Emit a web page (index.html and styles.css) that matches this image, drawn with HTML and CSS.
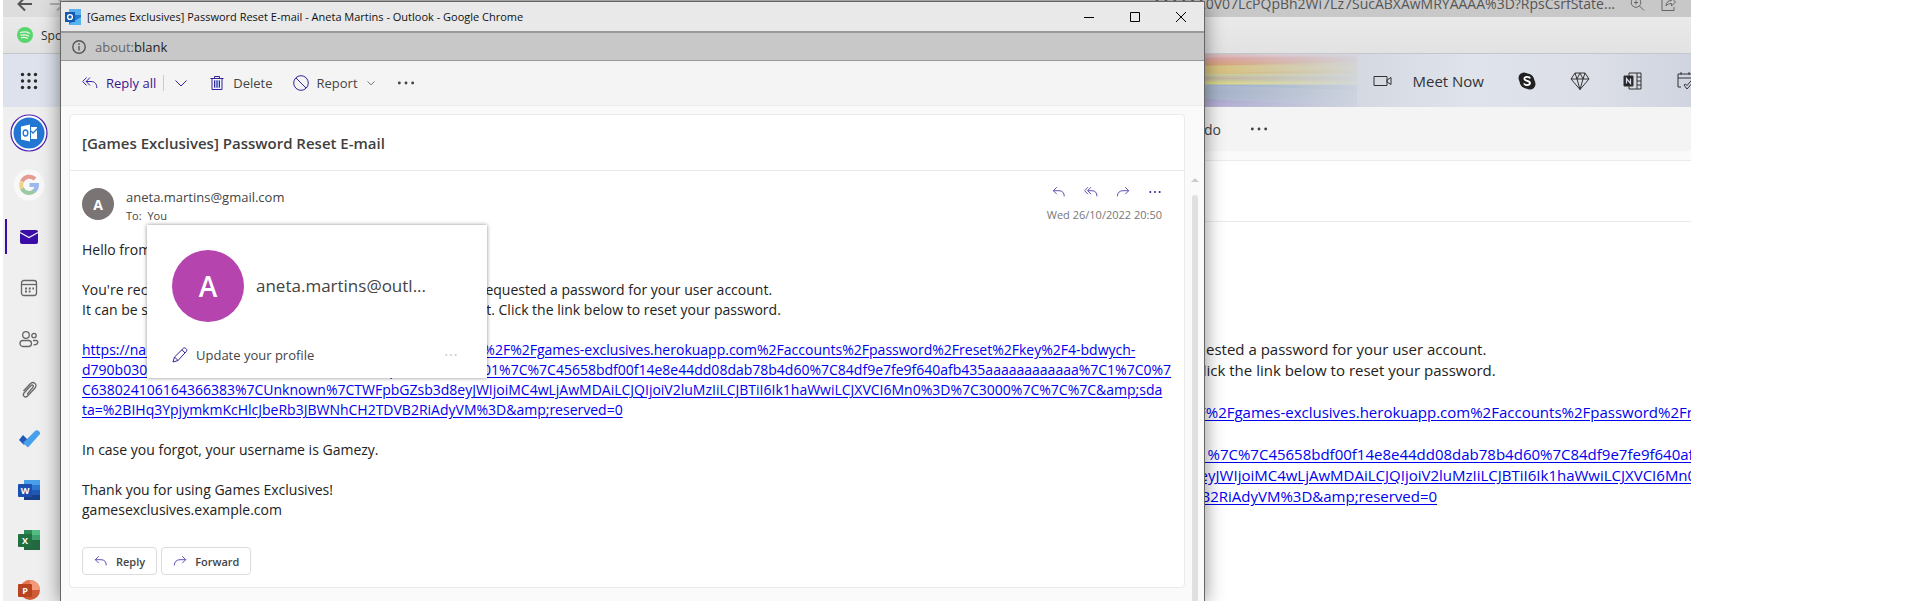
FILE: index.html
```html
<!DOCTYPE html>
<html lang="en">
<head>
<meta charset="utf-8">
<title>[Games Exclusives] Password Reset E-mail - Aneta Martins - Outlook</title>
<link rel="stylesheet" href="styles.css">
</head>
<body>
<svg class="defs" aria-hidden="true">
  <symbol id="reply" viewBox="0 0 16 16"><path d="M5.5 2.5 1.500 6.500l4 4M1.500 6.500H8c4 0 6 2.500 6 6.500"/></symbol>
  <symbol id="reply-all" viewBox="0 0 16 16"><path d="M4.500 2.500.700 6.500l3.800 4M8 2.500 4.200 6.500l3.800 4M4.200 6.500H9c4 0 5.800 2.500 5.800 6.500"/></symbol>
  <symbol id="forward" viewBox="0 0 16 16"><path d="m10.500 2.500 4 4-4 4M14.500 6.500H8c-4 0-6.500 2.500-6.500 6.500"/></symbol>
  <symbol id="chevron" viewBox="0 0 16 16"><path d="m2.500 5.500 5.500 5.500 5.500-5.500"/></symbol>
  <symbol id="dots" viewBox="0 0 18 4"><g fill="currentColor" stroke="none"><circle cx="3" cy="2" r="1.300"/><circle cx="9" cy="2" r="1.300"/><circle cx="15" cy="2" r="1.300"/></g></symbol>
</svg>

<div class="desktop">
  <div class="browser">
    <div class="address-row">
      <svg class="icon back" viewBox="0 0 16 16"><path d="M15 8H2M8 1.500 1.500 8 8 14.500"/></svg>
      <svg class="icon ahead" viewBox="0 0 16 16"><path d="M1 8h13M8 1.500 14.500 8 8 14.500"/></svg>
      <div class="address">AAAAAA0V07LcPQpBh2Wi7Lz7SucABXAwMRYAAAA%3D?RpsCsrfState...</div>
      <svg class="icon muted" viewBox="0 0 16 16"><circle cx="7" cy="6.500" r="4.800"/><path d="m10.500 10 4.500 4.500M7 4.500v4M5 6.500h4" /></svg>
      <svg class="icon muted" viewBox="0 0 16 16"><path d="M5 3H1v11.500h12V11M5 10c0-3.500 2-5.500 5.500-5.500V2l4 4-4 4V7.500C8 7.500 6.500 8 5 10z"/></svg>
    </div>
    <div class="bookmarks">
      <svg class="spotify" viewBox="0 0 16 16"><circle cx="8" cy="8" r="8" fill="#58d66d"/><path d="M3.500 5.500c3-.9 6.500-.6 9 .8M4 8.200c2.600-.7 5.400-.4 7.500.8M4.500 10.700c2-.5 4.300-.3 6 .6" fill="none" stroke="#e8f3e9" stroke-width="1.300" stroke-linecap="round"/></svg>
      <a href="#spotify">Spotify</a>
    </div>
    <div class="suite">
      <svg class="waffle" viewBox="0 0 18 18" fill="#2b2b2b"><circle cx="2.500" cy="2.500" r="1.700"/><circle cx="9" cy="2.500" r="1.700"/><circle cx="15.500" cy="2.500" r="1.700"/><circle cx="2.500" cy="9" r="1.700"/><circle cx="9" cy="9" r="1.700"/><circle cx="15.500" cy="9" r="1.700"/><circle cx="2.500" cy="15.500" r="1.700"/><circle cx="9" cy="15.500" r="1.700"/><circle cx="15.500" cy="15.500" r="1.700"/></svg>
      <svg class="rainbow" viewBox="0 0 203 53" preserveAspectRatio="none">
        <defs>
          <linearGradient id="fade"><stop offset="0" stop-color="#d8dce4" stop-opacity="0"/><stop offset=".35" stop-color="#d8dce4" stop-opacity=".15"/><stop offset=".75" stop-color="#d4d9e2" stop-opacity=".6"/><stop offset="1" stop-color="#d4d9e2" stop-opacity=".88"/></linearGradient>
          <linearGradient id="bands" x1="0" x2="0" y1="0" y2="1"><stop offset="0" stop-color="#dfcad0"/><stop offset=".08" stop-color="#d99a98"/><stop offset=".21" stop-color="#d39b68"/><stop offset=".23" stop-color="#d3bd6c"/><stop offset=".36" stop-color="#cfae60"/><stop offset=".38" stop-color="#c9ca8c"/><stop offset=".46" stop-color="#b9ad95"/><stop offset=".56" stop-color="#dad878"/><stop offset=".59" stop-color="#93a7c6"/><stop offset=".7" stop-color="#8199a9"/><stop offset=".85" stop-color="#93a5bc"/><stop offset=".88" stop-color="#a6a2cc"/><stop offset="1" stop-color="#b0acd0"/></linearGradient>
        </defs>
        <rect width="203" height="53" fill="url(#bands)"/>
        <path d="M50 4Q110 -2 203 0H50z" fill="#d7b3b4"/>
        <path d="M50 12 203 8v7L50 20z" fill="#d9c27a" opacity=".6"/>
        <path d="M50 31 203 36v17L50 45z" fill="#a9b3cf" opacity=".7"/>
        <rect width="203" height="53" fill="url(#fade)"/>
      </svg>
      <div class="suite-tools">
        <svg class="icon video" viewBox="0 0 20 16"><path d="M1 3.500h13v9H1zM14 7l4-2.500v7L14 9z"/></svg>
        <a class="meet" href="#meet">Meet Now</a>
        <svg class="icon" viewBox="0 0 20 20"><g fill="#222" stroke="none"><circle cx="7" cy="7" r="5.500"/><circle cx="13" cy="13" r="5.500"/><circle cx="10" cy="10" r="7.500"/></g><path stroke="#fff" stroke-width="1.800" d="M13 7.500C12.500 5.500 7.300 5.300 7.300 7.800S13 9.600 13 12.100s-5.500 2.600-6 .3"/></svg>
        <svg class="icon" viewBox="0 0 20 20"><path d="M5 2h10l4 6-9 10.500L1 8zM1 8h18M5 2l2 6 3 10.500L13 8l2-6M7 8l3-6 3 6"/></svg>
        <svg class="icon" viewBox="0 0 20 20"><path d="M6 5V2h12v16H6v-3M14 2v16M14 6h4M14 10h4M14 14h4"/><path fill="#222" d="M1 5h9v10H1z"/><path stroke="#dde" stroke-width="1.300" d="M3.500 12.500v-5l4 5v-5"/></svg>
        <svg class="icon" viewBox="0 0 20 20"><path d="M5 16H2V3h14v6M2 7h14M5 1v3M13 1v3M8 14l3 4 8-9-2-1.500-6 7L9.500 13z"/></svg>
      </div>
    </div>
    <div class="workspace">
      <nav class="rail" aria-label="Apps">
        <div class="rail-group accounts">
          <a href="#outlook"><svg width="38" height="38" viewBox="0 0 38 38"><circle cx="19" cy="19" r="18" fill="#fff" stroke="#4b20b0" stroke-width="1.200"/><circle cx="19" cy="19" r="15.500" fill="#2377d3"/><path fill="#fff" d="m11 12.500 9-2v17l-9-2zM21 13h6v12h-6z"/><ellipse cx="15.500" cy="19" rx="2.300" ry="3" fill="none" stroke="#2377d3" stroke-width="1.400"/><path d="m21 17 2 2 5-5" fill="none" stroke="#2377d3" stroke-width="1.300"/></svg></a>
          <a href="#google"><svg width="32" height="32" viewBox="0 0 32 32"><circle cx="16" cy="16" r="15.500" fill="#f8f8f8"/><g fill="none" stroke-width="4"><path stroke="#e69a92" d="M9 12.500a8 8 0 0 1 13-2.500"/><path stroke="#efd58c" d="M9 19.500a8 8 0 0 1 0-7"/><path stroke="#9bc9a3" d="M21.500 21.800A8 8 0 0 1 9 19.500"/><path stroke="#9bb9ec" d="M16.500 16H24a8 8 0 0 1-2.800 6"/></g></svg></a>
        </div>
        <div class="rail-group modules">
          <a class="active" href="#mail"><svg width="20" height="20" viewBox="0 0 20 20"><rect x="1" y="3" width="18" height="14" rx="2" fill="#3a0ca8"/><path d="m1 5.500 9 5 9-5" fill="none" stroke="#efefef" stroke-width="1.400"/></svg></a>
          <a href="#calendar"><svg class="icon line" viewBox="0 0 20 20"><rect x="2.500" y="2.500" width="15" height="15" rx="2.500"/><path d="M2.500 6.500h15"/><path stroke-dasharray="2 1.700" stroke-width="2" d="M6 10.500h9M6 13.500h5.500"/></svg></a>
          <a href="#people"><svg class="icon line" viewBox="0 0 20 20"><circle cx="7" cy="6" r="3.300"/><circle cx="15" cy="6.500" r="2.200"/><rect x="1" y="11.500" width="11.500" height="6" rx="3"/><path d="M14 11.500h3c3 0 2.500 4.500-2.500 4.300"/></svg></a>
          <a href="#files"><svg class="icon line" viewBox="0 0 20 20"><path d="m4.500 11 6.500-7c3.500-3.500 8 .5 5 4l-7.500 8c-2.500 2.500-5.500-.500-3.500-3l7-7.500c1.300-1.300 3.200.3 2 1.700L8 14.300"/></svg></a>
        </div>
        <div class="rail-group apps">
          <a href="#todo"><svg width="24" height="20" viewBox="0 0 24 20"><path fill="#2358b8" d="m5 5 5 5-4 5-5-5z"/><path fill="#46a0ea" d="m5 13 12-12c2-2 6 1 5 3L10 17.500z"/></svg></a>
          <a href="#word"><svg width="22" height="22" viewBox="0 0 22 22"><path fill="#4aa0e8" d="M6 1h16v5H6z"/><path fill="#2f78d2" d="M6 6h16v5H6z"/><path fill="#2058b5" d="M6 11h16v5H6z"/><path fill="#173f8c" d="M6 16h16v5H6z"/><rect y="5" width="14" height="13" rx="1" fill="#1d4fae"/><text x="7" y="15">W</text></svg></a>
          <a href="#excel"><svg width="22" height="22" viewBox="0 0 22 22"><path fill="#2e8b57" d="M6 1h8v10H6z"/><path fill="#52bd82" d="M14 1h8v5h-8z"/><path fill="#3ea06b" d="M14 6h8v5h-8z"/><path fill="#23683f" d="M6 11h16v10H6z"/><rect y="5" width="14" height="13" rx="1" fill="#226f40"/><text x="7" y="15">X</text></svg></a>
          <a href="#powerpoint"><svg width="22" height="22" viewBox="0 0 22 22"><circle cx="12" cy="11" r="10" fill="#ce5b35"/><path fill="#f49a78" d="M12 1a10 10 0 0 1 10 10H12z"/><path fill="#e5764f" d="M12 1v10H2A10 10 0 0 1 12 1z"/><rect y="5" width="14" height="13" rx="1" fill="#b8431f"/><text x="7" y="15">P</text></svg></a>
        </div>
      </nav>
      <main class="reader">
        <div class="reader-bar"><span>Undo</span><svg class="dots large"><use href="#dots"/></svg></div>
        <div class="reader-subject"></div>
        <div class="reader-body">
          <p>You're receiving this email because you or someone else has requested a password for your user account.<br>It can be safely ignored if you did not request a password reset. Click the link below to reset your password.</p>
          <p><a href="#reset">https://nam1.safelinks.protection.outlook.com/?url=https%3A%2F%2Fgames-exclusives.herokuapp.com%2Faccounts%2Fpassword%2Freset<br>%2Fkey%2F4-bdwych-<br>d790b0306a4d5ce17fd2f4bb8e1c9a207f%2F&amp;amp;data=05%7C01%7C%7C45658bdf00f14e8e44dd08dab78b4d60%7C84df9e7fe9f640afb435aaaaaaaaaaaa<br>%7C0%7638024106164366383%7CUnknown%7CTWFpbGZsb3d8eyJWIjoiMC4wLjAwMDAiLCJQIjoiV2luMzIiLCJBTiI6Ik1haWwiLCJXVCI6Mn0%3D<br>C%7C&amp;amp;sdata=%2BIHq3YpjymkmKcHlcJbeRb3JBWNhCH2TDVB2RiAdyVM%3D&amp;amp;reserved=0</a></p>
        </div>
      </main>
    </div>
  </div>

  <section class="window">
    <header class="titlebar">
      <svg class="app-icon" viewBox="0 0 16 16"><path fill="#5bb0ee" d="M4 0h12v8H4z"/><path fill="#1f78cc" d="M4 6h12v10H4z"/><path fill="#53b4f0" d="m4 15 12-7v8H4z"/><rect y="3" width="10" height="10" fill="#1259b0"/><circle cx="5" cy="8" r="2.400" fill="none" stroke="#fff" stroke-width="1.400"/></svg>
      <h1>[Games Exclusives] Password Reset E-mail - Aneta Martins - Outlook - Google Chrome</h1>
      <button aria-label="Minimize"><svg viewBox="0 0 10 10"><path d="M0 5.500h10"/></svg></button>
      <button aria-label="Maximize"><svg viewBox="0 0 10 10"><path d="M.500.500h9v9h-9z"/></svg></button>
      <button aria-label="Close"><svg viewBox="0 0 10 10"><path d="m0 0 10 10M10 0 0 10"/></svg></button>
    </header>
    <div class="location">
      <svg class="info" viewBox="0 0 14 14"><circle cx="7" cy="7" r="6.200"/><path d="M7 6v4.500M7 3.300v1.600"/></svg>
      <span>about:<b>blank</b></span>
    </div>
    <div class="commands">
      <button class="reply-all"><svg class="icon"><use href="#reply-all"/></svg>Reply all</button>
      <button class="split" aria-label="More reply options"><svg class="icon"><use href="#chevron"/></svg></button>
      <button class="delete"><svg class="icon" viewBox="0 0 16 16"><path fill="#a9c5ee" d="M5.500 5h5v8h-5z" stroke="none"/><path d="M1.500 3.500h13M5.500 3.500v-2h5v2M3 3.500v11h10v-11M5.500 5.500v7M8 5.500v7M10.500 5.500v7"/></svg>Delete</button>
      <button class="report"><svg class="icon" viewBox="0 0 16 16"><circle cx="8" cy="8" r="7.300"/><path d="m3 3 10 10"/></svg>Report<svg class="small-chevron"><use href="#chevron"/></svg></button>
      <button aria-label="More"><svg class="dots large"><use href="#dots"/></svg></button>
    </div>
    <div class="content">
      <article class="mail">
        <h2>[Games Exclusives] Password Reset E-mail</h2>
        <div class="message">
          <div class="sender">
            <span class="avatar">A</span>
            <div class="who"><div class="from">aneta.martins@gmail.com</div><div class="to">To: <span>You</span></div></div>
            <div class="meta">
              <div class="actions">
                <button aria-label="Reply"><svg class="icon"><use href="#reply"/></svg></button>
                <button aria-label="Reply all"><svg class="icon"><use href="#reply-all"/></svg></button>
                <button aria-label="Forward"><svg class="icon"><use href="#forward"/></svg></button>
                <button aria-label="More actions"><svg class="dots"><use href="#dots"/></svg></button>
              </div>
              <time>Wed 26/10/2022 20:50</time>
            </div>
          </div>
          <div class="text">
            <p>Hello from Games Exclusives!</p>
            <p>You're receiving this email because you or someone else has requested a password for your user account.<br>It can be safely ignored if you did not request a password reset. Click the link below to reset your password.</p>
            <p><a href="#reset">https://nam1.safelinks.protection.outlook.com/?url=https%3A%2F%2Fgames-exclusives.herokuapp.com%2Faccounts%2Fpassword%2Freset%2Fkey%2F4-bdwych-<br>d790b0306a4d5ce17fd2f4bb8e1c9a20%2F&amp;amp;data=05%7C01%7C%7C45658bdf00f14e8e44dd08dab78b4d60%7C84df9e7fe9f640afb435aaaaaaaaaaaa%7C1%7C0%7<br>C638024106164366383%7CUnknown%7CTWFpbGZsb3d8eyJWIjoiMC4wLjAwMDAiLCJQIjoiV2luMzIiLCJBTiI6Ik1haWwiLCJXVCI6Mn0%3D%7C3000%7C%7C%7C&amp;amp;sda<br>ta=%2BIHq3YpjymkmKcHlcJbeRb3JBWNhCH2TDVB2RiAdyVM%3D&amp;amp;reserved=0</a></p>
            <p>In case you forgot, your username is Gamezy.</p>
            <p>Thank you for using Games Exclusives!<br>gamesexclusives.example.com</p>
            <aside class="profile">
              <div class="identity"><span class="portrait">A</span><span class="name">aneta.martins@outl...</span></div>
              <div class="profile-actions">
                <button><svg class="icon" viewBox="0 0 16 16"><path d="m1 15 1.500-5L11.500 1.200c1.500-1.200 4.300 1.300 3 3L6 13.500zM10 2.700 13 6M2.500 10 6 13.500"/></svg>Update your profile</button>
                <button class="faint" aria-label="More"><svg class="dots"><use href="#dots"/></svg></button>
              </div>
            </aside>
          </div>
          <div class="responses">
            <button><svg class="icon"><use href="#reply"/></svg>Reply</button>
            <button><svg class="icon"><use href="#forward"/></svg>Forward</button>
          </div>
        </div>
      </article>
      <div class="scrollbar"><i></i><b></b></div>
    </div>
  </section>
</div>
</body>
</html>
```
FILE: styles.css
```css
* { box-sizing: border-box; }
body { margin: 0; background: #fff; color: #444; font-family: "Open Sans", "Noto Sans", sans-serif; font-size: 14px; }
h1, h2, p { margin: 0; font-weight: 400; }
button { display: flex; align-items: center; padding: 0; border: 0; background: none; color: inherit; font: inherit; }
svg { display: block; flex: none; }
.defs { position: absolute; width: 0; height: 0; }
.icon { width: 16px; height: 16px; fill: none; stroke: currentColor; stroke-width: 1; }
.dots { width: 14px; height: 4px; }
.dots.large { width: 20px; height: 6px; }

.desktop { position: relative; height: calc(100vh - 2px); margin: 0 229px 0 3px; overflow: hidden; }
.browser { height: 100%; display: flex; flex-direction: column; }
.address-row { display: flex; align-items: center; height: 17px; padding: 0 14px 10px; background: linear-gradient(90deg, #ddd 0 60px, #c8c8c8 60px); color: #555; }
.address-row .back { stroke-width: 2; }
.address-row .ahead { margin-left: 16px; color: #aaa; stroke-width: 2; }
.address { flex: 1; margin-right: 14px; text-align: right; font-size: 14px; line-height: 20px; }
.muted { color: #666; }
.muted + .muted { margin-left: 16px; }
.bookmarks { display: flex; align-items: center; gap: 8px; height: 37px; padding-left: 14px; border-bottom: 1px solid #c3c7cc; background: linear-gradient(#eaeaea, #e2e2e2); font-size: 12px; }
.bookmarks a { color: #333; text-decoration: none; }
.spotify { width: 16px; height: 16px; }
.suite { display: flex; align-items: center; justify-content: space-between; height: 53px; background: linear-gradient(90deg, #dde2ec 77%, #d4d8e0 80%, #dfe3ec 87%, #dcdfe7 94%, #cfd4e0); }
.waffle { width: 18px; height: 18px; margin-left: 17px; }
.rainbow { width: 203px; height: 53px; margin-left: auto; }
.suite-tools { display: flex; align-items: center; gap: 33px; margin: 0 -5px 0 16px; color: #333; }
.suite-tools .icon { width: 20px; height: 20px; }
.suite-tools .icon.video { margin-right: -14px; }
.meet { color: #333; font-size: 15px; text-decoration: none; }
.workspace { flex: 1; min-height: 0; display: flex; }
.rail { width: 58px; background: #efefef; color: #666; }
.rail-group a { display: flex; align-items: center; height: 50px; padding-left: 15px; }
.rail-group a svg { margin-right: auto; }
.rail .accounts a, .rail .modules a { height: 51px; }
.rail .accounts a { height: 52px; padding-left: 7px; }
.rail .accounts a + a { padding-left: 10px; }
.rail .modules a { padding-left: 12px; border-left: 2px solid transparent; margin-left: 2px; color: inherit; background-clip: padding-box; }
.rail .modules .active { height: 35px; margin-top: 8px; margin-bottom: 8px; border-left-color: #3a0ca8; }
.rail .modules .icon { width: 20px; height: 20px; stroke-width: 1.3px; }
.rail text { fill: #fff; font: 700 9px "Open Sans", sans-serif; text-anchor: middle; }
.reader { flex: 1; min-width: 0; }
.reader-bar { display: flex; align-items: center; justify-content: flex-end; gap: 28px; height: 44px; padding-right: 422px; background: #f4f4f4; font-size: 14px; }
.reader-subject { height: 71px; border-top: 9px solid #fafafa; border-bottom: 1px solid #ebebeb; box-shadow: inset 0 1px #ebebeb; }
.reader-body { display: flex; flex-direction: column; gap: 21px; padding: 117px 0 0 686px; color: #222; font-size: 15px; line-height: 21px; white-space: nowrap; }
a { color: #0000ee; text-underline-offset: 2px; }

.window { position: absolute; inset: 1px 486px 0 57px; display: flex; flex-direction: column; border: 1px solid #666; border-bottom: 0; background: #fafafa; box-shadow: 0 2px 18px rgba(0, 0, 0, .45); }
.titlebar { display: flex; align-items: center; height: 29px; padding-left: 4px; background: #e9e9e9; color: #111; }
.app-icon { width: 16px; height: 16px; }
.titlebar h1 { flex: 1; margin-left: 6px; font-size: 11px; }
.titlebar button { width: 46px; height: 28px; justify-content: center; }
.titlebar button svg { width: 10px; height: 10px; fill: none; stroke: #000; }
.location { display: flex; align-items: center; gap: 9px; height: 30px; padding-left: 11px; border-top: 2px solid #999; border-bottom: 1px solid #999; background: #c8c8c8; color: #666; font-size: 13px; }
.location b { color: #222; font-weight: 400; }
.info { width: 14px; height: 14px; fill: none; stroke: #555; stroke-width: 1.4px; }
.commands { display: flex; align-items: center; height: 45px; padding-left: 21px; border-bottom: 1px solid #ebebeb; background: #f4f4f4; font-size: 13px; }
.commands .icon { color: #33229a; }
.commands button { gap: 8px; }
.commands .reply-all { color: #3a1590; }
.commands .split { margin-left: 7px; padding: 0 20px 0 9px; border-left: 1px solid #ccc; }
.delete { margin-right: 20px; }
.report { margin-right: 20px; }
.small-chevron { width: 10px; height: 10px; fill: none; stroke: #666; stroke-width: 1.5px; }
.content { flex: 1; display: flex; align-items: flex-start; padding: 8px 0 0 8px; }
.mail { flex: 1; min-width: 0; border: 1px solid #ebebeb; border-radius: 4px; background: #fff; }
.mail h2 { height: 56px; padding-left: 12px; border-bottom: 1px solid #ebebeb; color: #3f3f3f; font-size: 15px; line-height: 56px; font-weight: 600; }
.message { padding: 12px 12px 12px; }
.sender { display: flex; align-items: center; height: 42px; gap: 12px; }
.avatar, .portrait { display: grid; place-items: center; width: 32px; height: 32px; border-radius: 50%; background: #7a7574; color: #fff; font-weight: 700; }
.who { flex: 1; padding-top: 4px; }
.from { font-size: 13px; line-height: 20px; }
.to { font-size: 11px; line-height: 18px; }
.to span { margin-left: 3px; }
.meta { padding-right: 10px; }
.actions { display: flex; justify-content: flex-end; gap: 18px; align-items: center; height: 18px; color: #33229a; }
.meta time { display: block; padding-top: 4px; color: #777; font-size: 11px; line-height: 20px; }
.text { position: relative; display: flex; flex-direction: column; gap: 20px; margin-top: 15px; color: #222; font-size: 14px; line-height: 20px; white-space: nowrap; }
.profile { position: absolute; left: 65px; top: -15px; width: 340px; padding: 25px; background: #fff; box-shadow: 0 0 4px rgba(0, 0, 0, .45); color: #444; }
.identity { display: flex; align-items: center; gap: 12px; }
.portrait { width: 72px; height: 72px; background: #b644ae; font-size: 28px; font-weight: 600; }
.name { font-size: 17px; }
.profile-actions { display: flex; justify-content: space-between; margin-top: 23px; margin-bottom: -12px; height: 20px; padding-right: 4px; font-size: 13px; }
.profile-actions button { gap: 8px; }
.profile .icon { color: #33229a; }
.faint { color: #ccc; }
.responses { display: flex; gap: 4px; margin-top: 27px; }
.responses button { height: 28px; gap: 8px; padding: 0 11px; border: 1px solid #dcdcdc; border-radius: 4px; font-size: 11px; font-weight: 600; }
.responses .icon, .actions .icon { width: 14px; height: 14px; color: #4a3ba8; }
.scrollbar { align-self: stretch; display: flex; flex-direction: column; align-items: center; width: 19px; padding-top: 64px; }
.scrollbar i { border: 4px solid transparent; border-top: 0; border-bottom-color: #ccc; }
.scrollbar b { flex: 1; width: 6px; margin-top: 13px; border-radius: 3px 3px 0 0; background: #e0e0e0; }
```
